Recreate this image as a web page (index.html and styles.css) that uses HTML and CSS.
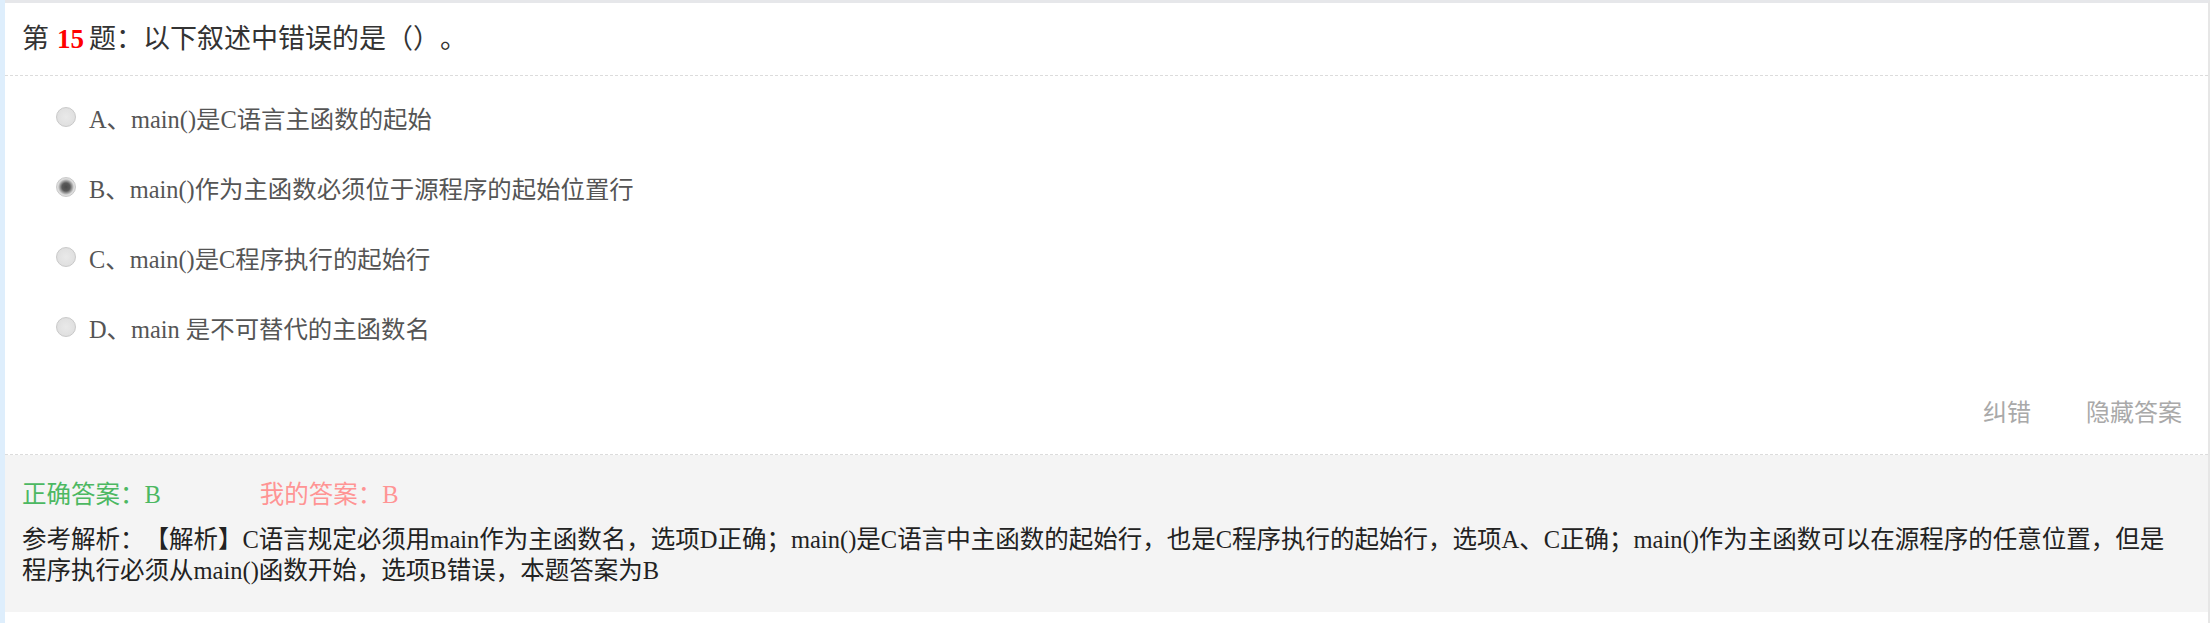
FILE: index.html
```html
<!DOCTYPE html>
<html lang="zh-CN">
<head>
    <meta charset="UTF-8">
    <meta name="viewport" content="width=device-width, initial-scale=1.0">
    <title>第15题</title>
    <link rel="stylesheet" href="styles.css">
</head>
<body>
    <div class="page">
        <div class="side"></div>
        <div class="card">
            <div class="q-title">第<b class="q-num">15</b>题：以下叙述中错误的是（）。</div>
            <ul class="options">
                <li><label><input type="radio" name="q15" value="A">A、main()是C语言主函数的起始</label></li>
                <li><label><input type="radio" name="q15" value="B" checked>B、main()作为主函数必须位于源程序的起始位置行</label></li>
                <li><label><input type="radio" name="q15" value="C">C、main()是C程序执行的起始行</label></li>
                <li><label><input type="radio" name="q15" value="D">D、main 是不可替代的主函数名</label></li>
            </ul>
            <div class="actions">
                <a href="#">纠错</a>
                <a href="#">隐藏答案</a>
            </div>
            <div class="answer">
                <p class="result"><span class="right">正确答案：B</span><span class="mine">我的答案：B</span></p>
                <p class="analysis">参考解析：【解析】C语言规定必须用main作为主函数名，选项D正确；main()是C语言中主函数的起始行，也是C程序执行的起始行，选项A、C正确；main()作为主函数可以在源程序的任意位置，但是程序执行必须从main()函数开始，选项B错误，本题答案为B</p>
            </div>
        </div>
    </div>
</body>
</html>
```

FILE: styles.css
```css
body {
    margin: 0;
    font-family: "Liberation Serif", "Noto Sans CJK SC", serif;
    color: #333;
    text-spacing-trim: space-all;
}
.page {
    display: flex;
    min-height: 100vh;
}
.side {
    width: 5px;
    background-color: #deeefc;
}
.card {
    flex: 1;
    background-color: #fff;
    border-top: 3px solid #e6e7ea;
    border-right: 2px solid #e6e6e6;
    padding-bottom: 10px;
}
.q-title {
    height: 72px;
    line-height: 72px;
    padding-left: 17px;
    font-size: 27px;
    border-bottom: 1px dashed #dcdcdc;
}
.q-num {
    color: #f00;
    padding: 0 5px 0 8px;
}
.options {
    list-style: none;
    margin: 0;
    padding: 6px 0 0 51px;
}
.options li {
    height: 70px;
    display: flex;
    align-items: center;
}
.options label {
    display: flex;
    align-items: center;
    font-size: 24.4px;
    color: #555;
}
.options input {
    appearance: none;
    -webkit-appearance: none;
    width: 20px;
    height: 20px;
    margin: 0 13px 0 0;
    border: 1px solid #c9c9c9;
    border-radius: 50%;
    background: radial-gradient(circle, #e9e9e9 0, #dcdcdc 100%);
}
.options input:checked {
    background: radial-gradient(circle, #4a4a4a 0, #5a5a5a 4px, #9a9a9a 6px, #dcdcdc 8px, #e4e4e4 100%);
}
.actions {
    display: flex;
    justify-content: flex-end;
    gap: 55px;
    padding: 31px 26px 21px 0;
    border-bottom: 1px dashed #dcdcdc;
}
.actions a {
    font-size: 24px;
    line-height: 40px;
    color: #a9a9a9;
    text-decoration: none;
}
.answer {
    background-color: #f4f4f4;
    padding: 25px 26px 26px 17px;
}
.answer p {
    margin: 0;
    font-size: 24.5px;
}
.result {
    line-height: 30px;
    margin-bottom: 14px !important;
}
.right {
    color: #4cb862;
    margin-right: 99px;
}
.mine {
    color: #ff9494;
}
.analysis {
    line-height: 31px;
    color: #222;
}
```
